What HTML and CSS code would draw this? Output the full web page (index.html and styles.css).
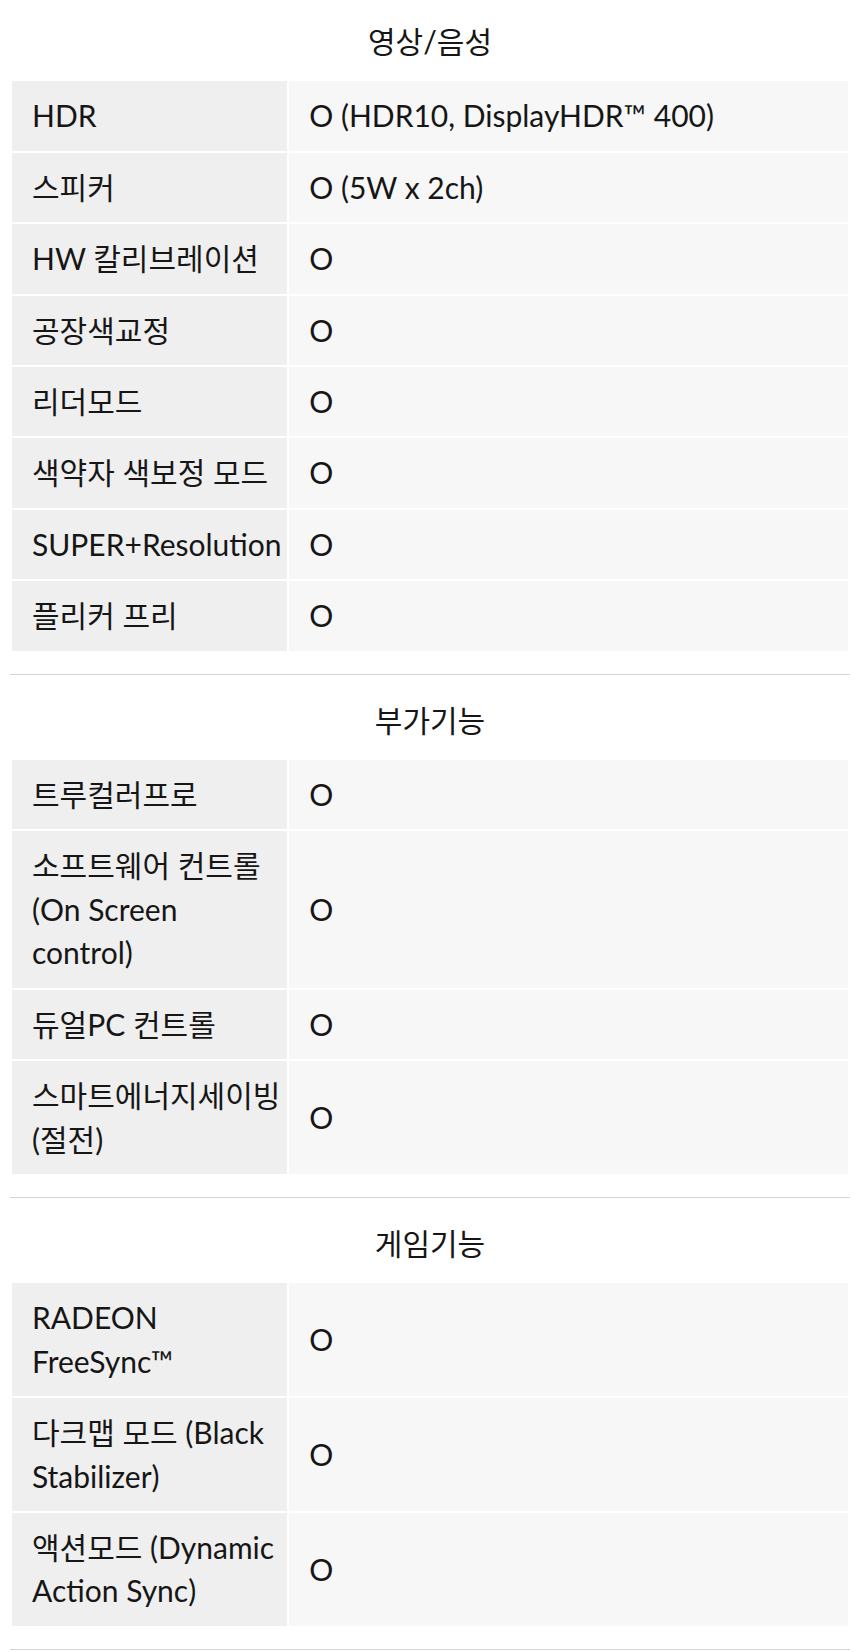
FILE: index.html
```html
<!DOCTYPE html>
<html lang="ko">
<head>
<meta charset="utf-8">
<title>스펙</title>
<link rel="stylesheet" href="styles.css">
</head>
<body>
<div class="page">
  <section class="section">
    <h2 class="title">영상/음성</h2>
    <table class="spec">
      <tr><th>HDR</th><td>O (HDR10, DisplayHDR™ 400)</td></tr>
      <tr><th>스피커</th><td>O (5W x 2ch)</td></tr>
      <tr><th>HW 칼리브레이션</th><td>O</td></tr>
      <tr><th>공장색교정</th><td>O</td></tr>
      <tr><th>리더모드</th><td>O</td></tr>
      <tr><th>색약자 색보정 모드</th><td>O</td></tr>
      <tr><th>SUPER+Resolution</th><td>O</td></tr>
      <tr><th>플리커 프리</th><td>O</td></tr>
    </table>
  </section>
  <section class="section">
    <h2 class="title">부가기능</h2>
    <table class="spec">
      <tr><th>트루컬러프로</th><td>O</td></tr>
      <tr><th>소프트웨어 컨트롤 (On Screen control)</th><td>O</td></tr>
      <tr><th>듀얼PC 컨트롤</th><td>O</td></tr>
      <tr><th>스마트에너지세이빙(절전)</th><td>O</td></tr>
    </table>
  </section>
  <section class="section">
    <h2 class="title">게임기능</h2>
    <table class="spec">
      <tr><th>RADEON FreeSync™</th><td>O</td></tr>
      <tr><th>다크맵 모드 (Black Stabilizer)</th><td>O</td></tr>
      <tr><th>액션모드 (Dynamic Action Sync)</th><td>O</td></tr>
    </table>
  </section>
</div>
</body>
</html>
```

FILE: styles.css
```css
html, body {
  margin: 0;
  padding: 0;
  background: #ffffff;
}

body {
  font-family: Lato, "Noto Sans CJK KR", sans-serif;
  color: #161616;
  font-size: 30px;
}

.page {
  padding: 0 10px;
}

.section {
  padding-bottom: 21px;
  border-bottom: 1px solid #d4d4d4;
}

.title {
  margin: 0;
  padding: 24px 0 16px;
  font-size: 30px;
  font-weight: 400;
  line-height: 43.4px;
  text-align: center;
  color: #161616;
}

.section:first-child .title {
  padding-top: 20px;
}

.spec {
  width: 100%;
  border-collapse: separate;
  border-spacing: 2px;
  table-layout: fixed;
}

.spec th,
.spec td {
  font-weight: 400;
  text-align: left;
  vertical-align: middle;
  line-height: 43.4px;
  padding: 13px 4px 13px 20px;
}

.spec th {
  width: 33%;
  background: #efefef;
  box-sizing: border-box;
}

.spec td {
  background: #f7f7f7;
  padding-right: 20px;
}
```
